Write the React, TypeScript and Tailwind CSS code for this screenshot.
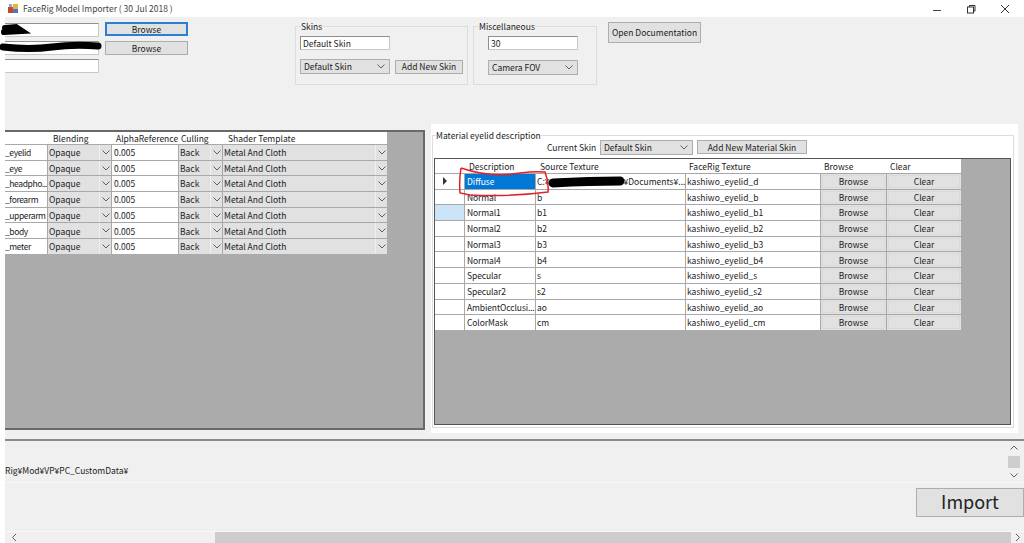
import React from "react";

const font = { fontFamily: '"Noto Sans CJK JP", "Noto Sans", sans-serif' };

const Chevron = ({ className = "" }: { className?: string }) => (
  <svg width="8" height="5" viewBox="0 0 8 5" className={className} fill="none" stroke="#606060" strokeWidth="1">
    <path d="M0.5 0.5 L4 4 L7.5 0.5" />
  </svg>
);

const Btn = ({ children, className = "" }: { children: React.ReactNode; className?: string }) => (
  <div className={"flex shrink-0 items-center justify-center border border-[#adadad] bg-[#e1e1e1] text-[8.5px] leading-none text-[#222] " + className}>
    {children}
  </div>
);

const Input = ({ children, className = "" }: { children?: React.ReactNode; className?: string }) => (
  <div className={"flex shrink-0 items-center border border-[#8f8f8f] border-b-[#c8c8c8] border-r-[#c8c8c8] bg-white pl-[2px] text-[8.5px] leading-none text-[#222] " + className}>
    {children}
  </div>
);

const Select = ({ label, className = "" }: { label: string; className?: string }) => (
  <div className={"flex shrink-0 items-center justify-between border border-[#adadad] bg-[#e1e1e1] pl-[3px] pr-[4px] text-[8.5px] leading-none text-[#222] " + className}>
    <span>{label}</span>
    <Chevron />
  </div>
);

const Group = ({ title, children, className = "" }: { title: string; children: React.ReactNode; className?: string }) => (
  <fieldset className={"shrink-0 border border-[#dcdcdc] pl-[4px] " + className}>
    <legend className="ml-[1px] text-[8.5px] leading-[10px] text-[#222]">{title}</legend>
    {children}
  </fieldset>
);

const materials = ["eyelid", "eye", "headpho...", "forearm", "upperarm", "body", "meter"];

const Cell = ({ children, className = "" }: { children?: React.ReactNode; className?: string }) => (
  <div className={"flex items-center overflow-hidden whitespace-nowrap bg-white text-[8.5px] leading-none text-[#222] " + className}>
    {children}
  </div>
);

const GridCombo = ({ label }: { label: string }) => (
  <div className="flex items-center justify-between bg-[#e1e1e1] pl-[1px] text-[8.5px] leading-none text-[#222]">
    <span>{label}</span>
    <span className="flex h-full w-[12px] items-center justify-center border-l border-[#f0f0f0]">
      <Chevron />
    </span>
  </div>
);

const leftCols = "grid grid-cols-[42px_63px_66px_43px_164px] gap-x-px";

const LeftGrid = () => (
  <div className="h-[300px] w-[420px] shrink-0 overflow-hidden border-r-2 border-b-2 border-t-2 border-[#696969] bg-[#ababab]">
    <div className="w-[382px] bg-[#a8a8a8]">
      <div className={leftCols + " h-[12px] bg-white"}>
        <Cell />
        <Cell className="pl-[5px]">Blending</Cell>
        <Cell className="pl-[4px]">AlphaReference</Cell>
        <Cell className="pl-[2px]">Culling</Cell>
        <Cell className="pl-[5px]">Shader Template</Cell>
      </div>
      {materials.map((m) => (
        <div key={m} className={leftCols + " mt-px h-[14.7px]"}>
          <Cell className="tracking-[-0.4px]">_{m}</Cell>
          <GridCombo label="Opaque" />
          <Cell className="pl-[2px]">0.005</Cell>
          <GridCombo label="Back" />
          <GridCombo label="Metal And Cloth" />
        </div>
      ))}
    </div>
  </div>
);

const rows: [string, string][] = [
  ["Diffuse", "C:¥"],
  ["Normal", "b"],
  ["Normal1", "b1"],
  ["Normal2", "b2"],
  ["Normal3", "b3"],
  ["Normal4", "b4"],
  ["Specular", "s"],
  ["Specular2", "s2"],
  ["AmbientOcclusi...", "ao"],
  ["ColorMask", "cm"],
];
const suffix = ["d", "b", "b1", "b2", "b3", "b4", "s", "s2", "ao", "cm"];

const rightCols = "grid grid-cols-[29px_70px_149px_134px_65px_74px] gap-x-px";

const RightGrid = () => (
  <div className="ml-px mt-px h-[267px] w-[577px] overflow-hidden border border-[#555] bg-[#ababab]">
    <div className="w-[526px] bg-[#a8a8a8]">
      <div className={rightCols + " h-[14px] bg-white"}>
        <Cell />
        <Cell className="pl-[4px]">Description</Cell>
        <Cell className="pl-[4px]">Source Texture</Cell>
        <Cell className="pl-[3px]">FaceRig Texture</Cell>
        <Cell className="pl-[3px]">Browse</Cell>
        <Cell className="pl-[3px]">Clear</Cell>
      </div>
      {rows.map(([d, s], i) => (
        <div key={d} className={rightCols + " mt-px h-[14.7px]"}>
          <Cell className={i === 2 ? "justify-center !bg-[#cce4f7]" : "justify-center"}>
            {i === 0 && (
              <svg width="6" height="8" viewBox="0 0 6 8" className="-ml-[10px]">
                <path d="M1 0 L5 4 L1 8 Z" fill="#333" />
              </svg>
            )}
          </Cell>
          {i === 0 ? (
            <div className="flex items-center bg-[#0078d7] pl-[2px] text-[8.5px] leading-none text-white">{d}</div>
          ) : (
            <Cell className="pl-[2px] tracking-[-0.1px]">{d}</Cell>
          )}
          <Cell className="pl-[1px]">
            {i === 0 ? (
              <span>
                C:¥<span className="inline-block w-[74px]" />¥Documents¥...
              </span>
            ) : (
              s
            )}
          </Cell>
          <Cell className="pl-[1px]">kashiwo_eyelid_{suffix[i]}</Cell>
          <div className="flex items-center justify-center bg-[#e1e1e1] text-[8.5px] leading-none text-[#222] outline outline-1 -outline-offset-2 outline-[#dadada]">Browse</div>
          <div className="flex items-center justify-center bg-[#e1e1e1] text-[8.5px] leading-none text-[#222] outline outline-1 -outline-offset-2 outline-[#dadada]">Clear</div>
        </div>
      ))}
    </div>
  </div>
);

export default function App() {
  return (
    <div className="relative flex h-[543px] w-[1024px] flex-col overflow-hidden bg-white" style={font}>
      {/* title bar */}
      <div className="flex h-[17px] shrink-0 items-center pl-[8px] text-[8.5px] leading-none text-[#444]">
        <svg width="11" height="11" viewBox="0 0 11 11" className="mr-[4px]">
          <rect x="0" y="4" width="5" height="6" fill="#c8452e" />
          <rect x="5" y="1" width="5" height="5" fill="#e6b33c" />
          <rect x="5" y="6" width="5" height="4" fill="#4a78c8" />
          <rect x="1" y="1" width="3" height="3" fill="#8fa8d8" />
        </svg>
        <span>FaceRig Model Importer ( 30 Jul 2018 )</span>
        <div className="ml-auto flex items-center">
          <svg width="10" height="10" viewBox="0 0 10 10" className="mr-[24px]" stroke="#444" fill="none">
            <path d="M1 6.5 H9" />
          </svg>
          <svg width="10" height="10" viewBox="0 0 10 10" className="mr-[24px]" stroke="#333" fill="none">
            <rect x="1.5" y="3" width="6" height="6" />
            <path d="M3.5 3 V1.5 H9 V7 H7.5" />
          </svg>
          <svg width="10" height="10" viewBox="0 0 10 10" className="mr-[14px]" stroke="#333" fill="none">
            <path d="M1 1 L9 9 M9 1 L1 9" />
          </svg>
        </div>
      </div>

      <div className="ml-[5px] flex min-h-0 flex-1 flex-col bg-[#f0f0f0]">
        {/* top toolbar */}
        <div className="flex h-[111px] shrink-0 items-start pt-[6px]">
          <div className="flex w-[94px] shrink-0 flex-col gap-[4px]">
            <Input className="h-[14px] border-l-0" />
            <Input className="h-[14px] border-l-0" />
            <Input className="h-[14px] border-l-0" />
          </div>
          <div className="ml-[6px] -mt-px flex flex-col gap-[5px]">
            <Btn className="h-[14px] w-[83px] !border-2 !border-[#2a7fd0]">Browse</Btn>
            <Btn className="h-[14px] w-[83px]">Browse</Btn>
          </div>
          <Group title="Skins" className="ml-[107px] mt-[-2px] h-[64px] w-[173px]">
            <Input className="mt-[5px] h-[14px] w-[90px]">Default Skin</Input>
            <div className="mt-[9px] flex items-center gap-[5px]">
              <Select label="Default Skin" className="h-[15px] w-[90px]" />
              <Btn className="h-[14px] w-[68px]">Add New Skin</Btn>
            </div>
          </Group>
          <Group title="Miscellaneous" className="ml-[5px] mt-[-2px] h-[64px] w-[124px]">
            <Input className="ml-[10px] mt-[5px] h-[14px] w-[90px]">30</Input>
            <Select label="Camera FOV" className="ml-[10px] mt-[10px] h-[15px] w-[90px]" />
          </Group>
          <Btn className="ml-[11px] -mt-px h-[21px] w-[93px]">Open Documentation</Btn>
        </div>

        {/* main panels */}
        <div className="flex h-[304px] shrink-0 items-start">
          <div className="pt-[2px]">
            <LeftGrid />
          </div>
          <div className="ml-[6px] h-[309px] w-[587px] shrink-0 -translate-y-[4px] bg-white pl-[1px] pr-[4px] pt-[6px]">
            <fieldset className="h-[298px] border border-[#dcdcdc]">
              <legend className="ml-[3px] text-[8.5px] leading-[10px] text-[#222]">Material eyelid description</legend>
              <div className="flex h-[17px] items-start pl-[114px]">
                <span className="mt-[2px] w-[53px] shrink-0 text-[8.5px] leading-[10px] text-[#222]">Current Skin</span>
                <Select label="Default Skin" className="h-[15px] w-[93px]" />
                <Btn className="ml-[4px] h-[14px] w-[110px]">Add New Material Skin</Btn>
              </div>
              <RightGrid />
            </fieldset>
          </div>
        </div>

        {/* log */}
        <div className="mt-[7px] flex h-[43px] shrink-0 border-t-2 border-[#8a8a8a]">
          <div className="flex flex-1 items-end overflow-hidden whitespace-nowrap pb-[8px] text-[8.5px] leading-none text-[#222]">Rig¥Mod¥VP¥PC_CustomData¥</div>
          <div className="mr-[4px] flex w-[13px] flex-col items-center justify-between bg-[#f0f0f0] py-[4px]">
            <Chevron className="rotate-180" />
            <div className="h-[12px] w-[12px] bg-[#cdcdcd]" />
            <Chevron />
          </div>
        </div>

        <div className="flex h-[49px] shrink-0 items-start justify-end border-t border-[#f8f8f8] pt-[5px]">
          <Btn className="h-[29px] w-[108px] pb-[3px] !text-[18px]">Import</Btn>
        </div>

        {/* horizontal scrollbar */}
        <div className="flex h-[12px] shrink-0 items-center border-t border-[#f8f8f8]">
          <Chevron className="ml-[5px] rotate-90" />
          <div className="ml-[197px] h-full w-[796px] bg-[#cdcdcd]" />
          <Chevron className="ml-[3px] -rotate-90" />
        </div>
      </div>

      {/* redaction marks and hand-drawn annotation */}
      <svg width="1024" height="543" viewBox="0 0 1024 543" className="pointer-events-none absolute left-0 top-0">
        <path d="M5 28 L16 27 L22 31 L4 32" stroke="#000" strokeWidth="6" strokeLinecap="round" fill="none" />
        <path d="M3 47 Q30 50 52 47 T98 46" stroke="#000" strokeWidth="7" strokeLinecap="round" fill="none" />
        <path d="M553 183 Q590 181 620 181" stroke="#000" strokeWidth="9" strokeLinecap="round" fill="none" />
        <path d="M461 168 Q490 178 520 173 Q535 171 545 172 Q549 182 548 192 Q510 197 470 195 L460 193 Q459 180 461 168" stroke="#e61e28" strokeWidth="1.5" fill="none" />
      </svg>
    </div>
  );
}
